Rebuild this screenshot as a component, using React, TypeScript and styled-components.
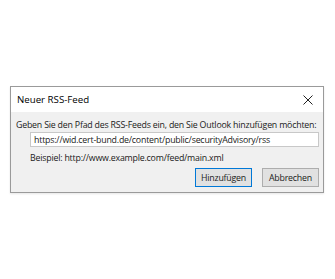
import React, { useState } from 'react';
import styled, { createGlobalStyle } from 'styled-components';

const GlobalStyle = createGlobalStyle`
  html, body {
    margin: 0;
    padding: 0;
    background: #ffffff;
  }
  body {
    font-family: "Open Sans", "Noto Sans", sans-serif;
  }
`;

const Page = styled.div`
  width: 335px;
  height: 279px;
  padding: 86px 0 0 10px;
  box-sizing: border-box;
`;

const Dialog = styled.div`
  width: 314px;
  height: 107px;
  box-sizing: border-box;
  border: 1px solid #9a9a9a;
  background: #f0f0f0;
  display: flex;
  flex-direction: column;
  box-shadow: 0 1px 2px rgba(0, 0, 0, 0.1);
`;

const TitleBar = styled.div`
  height: 25px;
  flex-shrink: 0;
  background: #ffffff;
  display: flex;
  align-items: center;
  justify-content: space-between;
  padding: 0 9px 0 6px;
  font-size: 9.7px;
  color: #000;
`;

const CloseButton = styled.button`
  border: none;
  background: transparent;
  padding: 0;
  width: 12px;
  height: 12px;
  display: flex;
  align-items: center;
  justify-content: center;
`;

const Body = styled.div`
  flex: 1;
  display: flex;
  flex-direction: column;
  padding: 6px 4px 0 5px;
  font-size: 8.8px;
  letter-spacing: -0.2px;
  color: #1a1a1a;
`;

const Prompt = styled.div`
  line-height: 14px;
  white-space: nowrap;
`;

const Indented = styled.div`
  padding-left: 14px;
`;

const UrlInput = styled.input`
  display: block;
  width: 289px;
  height: 15px;
  box-sizing: border-box;
  border: 1px solid #c8c8c8;
  background: #ffffff;
  font: inherit;
  letter-spacing: inherit;
  color: #1a1a1a;
  padding: 0 3px;
  margin: 0;
  outline: none;
`;

const Example = styled.div`
  line-height: 14px;
  margin-top: 4px;
`;

const ButtonRow = styled.div`
  display: flex;
  justify-content: flex-end;
  gap: 10px;
  margin-top: 3px;
`;

const DialogButton = styled.button<{ $primary?: boolean }>`
  width: 57px;
  height: 19px;
  box-sizing: border-box;
  border: 1px solid ${(p) => (p.$primary ? '#0078d7' : '#adadad')};
  background: #e1e1e1;
  font: inherit;
  letter-spacing: inherit;
  color: #1a1a1a;
  padding: 0;
`;

export default function App() {
  const [url, setUrl] = useState('https://wid.cert-bund.de/content/public/securityAdvisory/rss');

  return (
    <Page>
      <GlobalStyle />
      <Dialog>
        <TitleBar>
          <span>Neuer RSS-Feed</span>
          <CloseButton aria-label="Schließen">
            <svg width="10" height="10" viewBox="0 0 10 10">
              <path d="M0.5 0.5 L9.5 9.5 M9.5 0.5 L0.5 9.5" stroke="#222" strokeWidth="1" />
            </svg>
          </CloseButton>
        </TitleBar>
        <Body>
          <Prompt>Geben Sie den Pfad des RSS-Feeds ein, den Sie Outlook hinzufügen möchten:</Prompt>
          <Indented>
            <UrlInput value={url} onChange={(e) => setUrl(e.target.value)} />
            <Example>Beispiel: http://www.example.com/feed/main.xml</Example>
          </Indented>
          <ButtonRow>
            <DialogButton $primary>Hinzufügen</DialogButton>
            <DialogButton>Abbrechen</DialogButton>
          </ButtonRow>
        </Body>
      </Dialog>
    </Page>
  );
}
